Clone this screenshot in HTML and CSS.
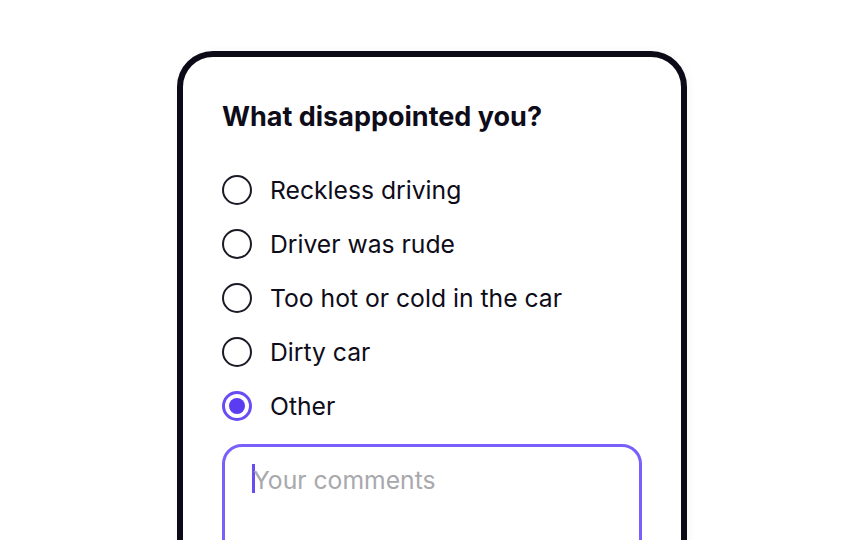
FILE: index.html
```html
<!DOCTYPE html>
<html lang="en">
<head>
  <meta charset="UTF-8"/>
  <meta name="viewport" content="width=device-width, initial-scale=1.0"/>
  <title>Feedback</title>
  <link rel="stylesheet" href="styles.css">
</head>
<body>

  <div class="card">
    <h2 class="title">What disappointed you?</h2>

    <ul class="options">
      <li class="option"><span class="radio"></span>Reckless driving</li>
      <li class="option"><span class="radio"></span>Driver was rude</li>
      <li class="option"><span class="radio"></span>Too hot or cold in the car</li>
      <li class="option"><span class="radio"></span>Dirty car</li>
      <li class="option"><span class="radio checked"></span>Other</li>
    </ul>

    <div class="comments" role="textbox">
      <span class="caret"></span><span class="placeholder">Your comments</span>
    </div>
  </div>

</body>
</html>
```

FILE: styles.css
```css
* {
  box-sizing: border-box;
  margin: 0;
  padding: 0;
}

body {
  font-family: Inter, 'Noto Sans', sans-serif;
  background: #fff;
  color: #0e0c19;
  overflow: hidden;
}

.card {
  width: 510px;
  height: 560px;
  margin: 51px auto 0;
  padding: 43px 39px 0;
  border: 6px solid #0c0a17;
  border-radius: 36px;
  background: #fff;
  box-shadow: 2px 0 10px rgba(0, 0, 0, 0.04);
}

.title {
  font-size: 27px;
  font-weight: 700;
  line-height: 33px;
  margin-bottom: 42px;
}

.options {
  list-style: none;
  display: flex;
  flex-direction: column;
  gap: 24px;
}

.option {
  display: flex;
  align-items: center;
  height: 30px;
  font-size: 24.7px;
  gap: 18px;
}

.radio {
  width: 30px;
  height: 30px;
  border: 2px solid #1c1a26;
  border-radius: 50%;
  flex-shrink: 0;
  display: flex;
  align-items: center;
  justify-content: center;
}

.radio.checked {
  border: 3px solid #6a4cf5;
}

.radio.checked::after {
  content: "";
  width: 16px;
  height: 16px;
  border-radius: 50%;
  background: #5b3cf0;
}

.comments {
  margin-top: 23px;
  height: 170px;
  border: 3px solid #7a5ffa;
  border-radius: 20px;
  padding: 17px 27px;
  font-size: 24.7px;
  line-height: 30px;
  display: flex;
  align-items: flex-start;
}

.caret {
  width: 3px;
  height: 29px;
  background: #6a4cf5;
}

.placeholder {
  color: #a8a8ad;
  margin-top: 1px;
  margin-left: -2px;
}
```
